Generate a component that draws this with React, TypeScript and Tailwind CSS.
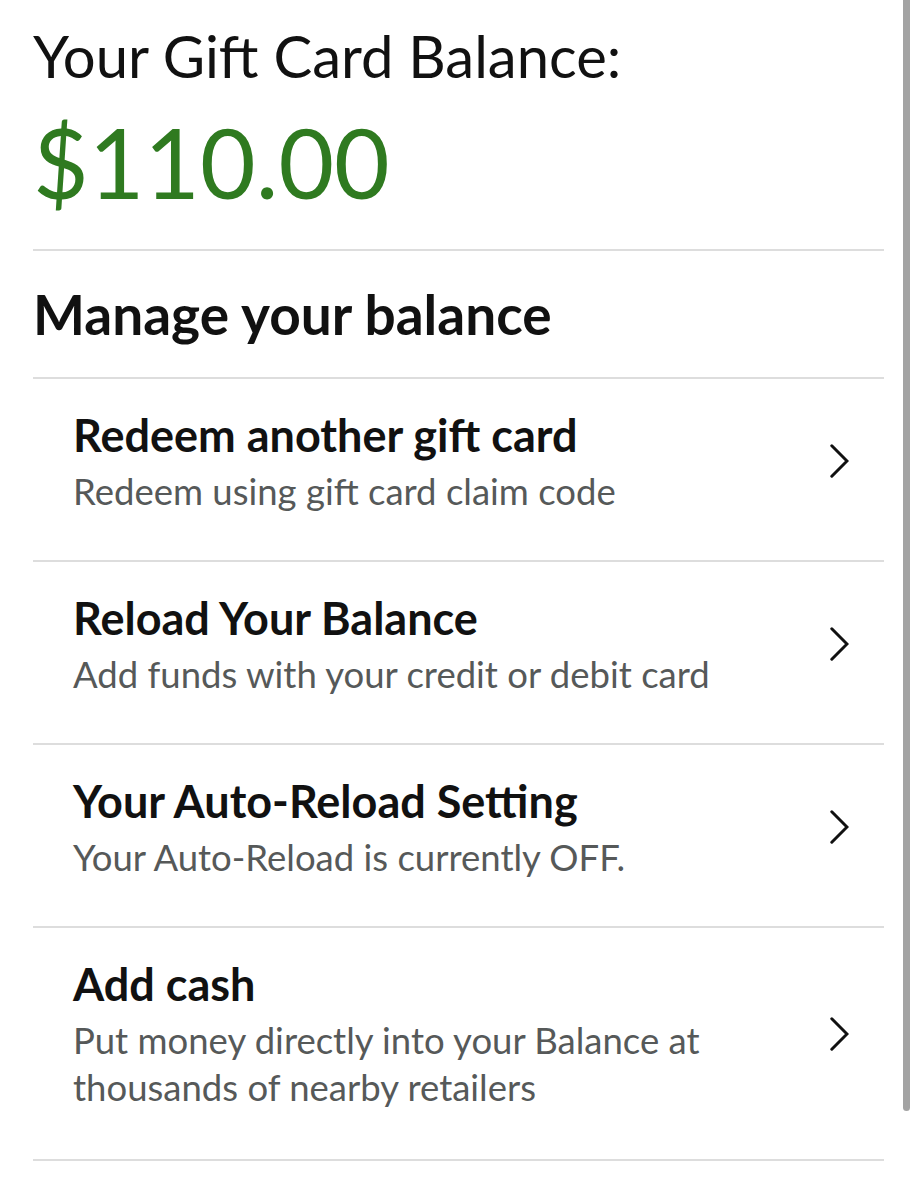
const rows = [
    { title: 'Redeem another gift card', sub: 'Redeem using gift card claim code' },
    { title: 'Reload Your Balance', sub: 'Add funds with your credit or debit card' },
    { title: 'Your Auto-Reload Setting', sub: 'Your Auto-Reload is currently OFF.' },
    { title: 'Add cash', sub: 'Put money directly into your Balance at thousands of nearby retailers' },
];

function Chevron() {
    return (
        <svg width="19" height="34" viewBox="0 0 19 34" className="shrink-0">
            <polyline points="1.8,1.8 17,17 1.8,32.2" fill="none" stroke="#111111" strokeWidth="3" strokeLinecap="round" strokeLinejoin="miter" />
        </svg>
    );
}

function Row({ title, sub }: { title: string; sub: string }) {
    return (
        <div className="flex items-center border-b-2 border-[#dddddd] pl-[40px] pr-[35px] pt-[28px] pb-[45px] last:pb-[48px]">
            <div className="flex-1 min-w-0 pr-[60px]">
                <div className="text-[45px] leading-[56px] font-bold text-[#111111]">{title}</div>
                <div className="text-[36.5px] leading-[47px] text-[#565959] mt-[5px]">{sub}</div>
            </div>
            <Chevron />
        </div>
    );
}

export default function App() {
    return (
        <div className="relative w-[917px] min-h-[1200px] bg-white font-['Lato','Noto_Sans',sans-serif]">
            <div className="px-[33px]">
                <div className="border-b-2 border-[#dddddd] pt-[22px] pb-[32px]">
                    <div className="text-[58px] leading-[68px] text-[#111111]">Your Gift Card Balance:</div>
                    <div className="text-[96px] leading-[110px] text-[#2f7a20] mt-[17px]">$110.00</div>
                </div>
                <div className="border-b-2 border-[#dddddd] h-[128px] flex items-center">
                    <h2 className="text-[55px] font-bold text-[#111111]">Manage your balance</h2>
                </div>
                {rows.map((r) => (
                    <Row key={r.title} title={r.title} sub={r.sub} />
                ))}
            </div>
            <div className="absolute top-0 left-[903px] w-[7px] h-[1111px] rounded-b-full bg-[#a3a3a3]" />
        </div>
    );
}
